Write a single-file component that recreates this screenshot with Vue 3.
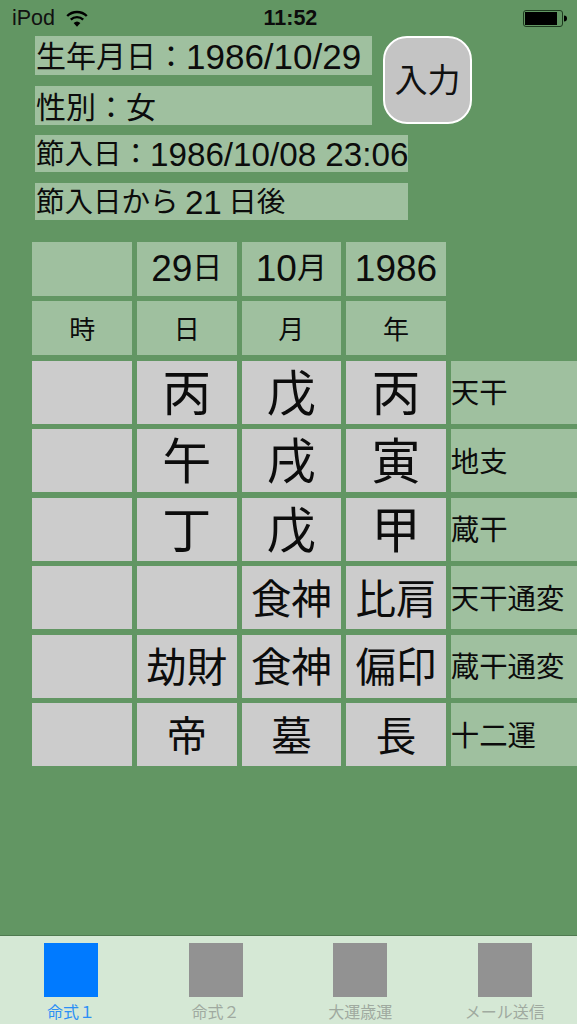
<script setup>
const dateRow = [
  { num: '', unit: '' },
  { num: '29', unit: '日' },
  { num: '10', unit: '月' },
  { num: '1986', unit: '' }
]
const pillarRow = ['時', '日', '月', '年']
const rows = [
  { cells: ['', '丙', '戊', '丙'], label: '天干', size: 'big' },
  { cells: ['', '午', '戌', '寅'], label: '地支', size: 'big' },
  { cells: ['', '丁', '戊', '甲'], label: '蔵干', size: 'big' },
  { cells: ['', '', '食神', '比肩'], label: '天干通変', size: 'mid' },
  { cells: ['', '劫財', '食神', '偏印'], label: '蔵干通変', size: 'mid' },
  { cells: ['', '帝', '墓', '長'], label: '十二運', size: 'mid' }
]
const tabs = [
  { label: '命式１', active: true },
  { label: '命式２' },
  { label: '大運歳運' },
  { label: 'メール送信' }
]
</script>

<template>
  <div class="screen">
    <header class="status">
      <div class="status-left">
        <span class="carrier">iPod</span>
        <svg class="wifi" width="22" height="17" viewBox="0 0 22 17">
          <path d="M1.2 6 A14 14 0 0 1 20.8 6" fill="none" stroke="#000" stroke-width="2.4" />
          <path d="M4.8 9.6 A9 9 0 0 1 17.2 9.6" fill="none" stroke="#000" stroke-width="2.4" />
          <path d="M7.6 13 L11 16.8 L14.4 13 A5 5 0 0 0 7.6 13 Z" fill="#000" />
        </svg>
      </div>
      <span class="time">11:52</span>
      <svg class="battery" width="44" height="17" viewBox="0 0 44 17">
        <rect x="0.5" y="0.5" width="39" height="16" rx="2.5" fill="none" stroke="#1d3a1e" stroke-width="1" />
        <rect x="2" y="2" width="32" height="13" fill="#000" />
        <path d="M41 5.5 A3 3 0 0 1 41 11.5 Z" fill="#000" />
      </svg>
    </header>

    <section class="info">
      <div class="info-top">
        <div class="info-fields">
          <div class="field tall"><span>生年月日：<span class="num num-l">1986/10/29</span></span></div>
          <div class="field tall"><span>性別：女</span></div>
        </div>
        <button class="input-btn">入力</button>
      </div>
      <div class="field wide"><span>節入日：<span class="num num-m">1986/10/08 23:06</span></span></div>
      <div class="field wide"><span>節入日から <span class="num num-m">21</span> 日後</span></div>
    </section>

    <section class="table">
      <div v-for="(d, i) in dateRow" :key="'d' + i" class="cell head date">
        <span><span class="num num-g">{{ d.num }}</span>{{ d.unit }}</span>
      </div>
      <div class="spacer"></div>
      <div v-for="p in pillarRow" :key="p" class="cell head pillar">{{ p }}</div>
      <div class="spacer"></div>
      <template v-for="row in rows" :key="row.label">
        <div v-for="(c, i) in row.cells" :key="i" class="cell body" :class="row.size">{{ c }}</div>
        <div class="cell label">{{ row.label }}</div>
      </template>
    </section>

    <nav class="tabbar">
      <div v-for="t in tabs" :key="t.label" class="tab" :class="{ active: t.active }">
        <div class="tab-icon"></div>
        <span class="tab-label">{{ t.label }}</span>
      </div>
    </nav>
  </div>
</template>

<style>
html, body { margin: 0; padding: 0; }
</style>

<style scoped>
.screen {
  width: 577px;
  height: 1024px;
  background: #629663;
  display: flex;
  flex-direction: column;
  overflow: hidden;
  font-family: "Noto Sans CJK JP", "Liberation Sans", sans-serif;
  color: #0c0c0c;
}
.status {
  height: 36px;
  flex: none;
  position: relative;
  display: flex;
  align-items: center;
  justify-content: space-between;
  padding: 0 10px 0 12px;
  box-sizing: border-box;
  font-family: "Liberation Sans", sans-serif;
  font-size: 21.5px;
}
.status-left { display: flex; align-items: center; gap: 11px; }
.carrier { color: #111; }
.wifi, .battery { display: block; }
.time {
  position: absolute;
  left: 263.5px;
  font-weight: 700;
  font-size: 21.5px;
}
.info {
  padding-left: 35px;
  display: flex;
  flex-direction: column;
  gap: 10.5px;
}
.info-top { display: flex; gap: 11px; }
.info-fields { display: flex; flex-direction: column; gap: 10.5px; }
.field {
  background: #9fc09f;
  display: flex;
  align-items: center;
  white-space: pre;
  box-sizing: border-box;
  padding-left: 1px;
}
.field > span { display: block; line-height: 36px; }
.tall { width: 337px; height: 39px; font-size: 30px; padding-bottom: 1px; }
.wide { width: 373px; height: 37px; font-size: 28.5px; }
.num {
  font-family: "Liberation Sans", sans-serif;
  vertical-align: -2px;
}
.num-l { font-size: 35px; }
.num-m { font-size: 33.2px; }
.num-g { font-size: 37px; vertical-align: -3px; }
.input-btn {
  width: 89px;
  height: 88px;
  box-sizing: border-box;
  background: #c4c4c4;
  border: 2px solid #fff;
  border-radius: 24px;
  font-family: inherit;
  font-size: 33px;
  color: #111;
  padding: 0 0 4px;
}
.table {
  margin-top: 22.2px;
  padding-left: 32.4px;
  display: grid;
  grid-template-columns: repeat(4, 99.6px) 1fr;
  grid-template-rows: 54.3px 54.3px repeat(6, 63.3px);
  gap: 5.2px 5px;
}
.cell {
  display: flex;
  align-items: center;
  justify-content: center;
  white-space: nowrap;
  box-sizing: border-box;
}
.head { background: #9fc09f; }
.date { font-size: 30px; }
.date > span { display: block; line-height: 40px; padding-bottom: 3px; }
.pillar { font-size: 26px; padding-bottom: 2px; }
.body { background: #cccccc; }
.body.big { font-size: 49px; padding-bottom: 6px; }
.body.mid { font-size: 40.5px; padding-bottom: 3px; }
.label {
  background: #9fc09f;
  justify-content: flex-start;
  font-size: 28.4px;
  padding-bottom: 3px;
}
.tabbar {
  margin-top: auto;
  margin-left: -1.3px;
  height: 89px;
  flex: none;
  box-sizing: border-box;
  border-top: 1px solid #4f7a50;
  background: #d5e8d5;
  display: grid;
  grid-template-columns: repeat(4, 1fr);
  padding-top: 7px;
}
.tab {
  display: flex;
  flex-direction: column;
  align-items: center;
  color: #a0aaa0;
}
.tab-icon { width: 54px; height: 54px; background: #929292; }
.tab-label { font-size: 16px; line-height: 24px; margin-top: 2px; }
.tab.active { color: #2b8ff5; }
.tab.active .tab-icon { background: #007aff; }
</style>
